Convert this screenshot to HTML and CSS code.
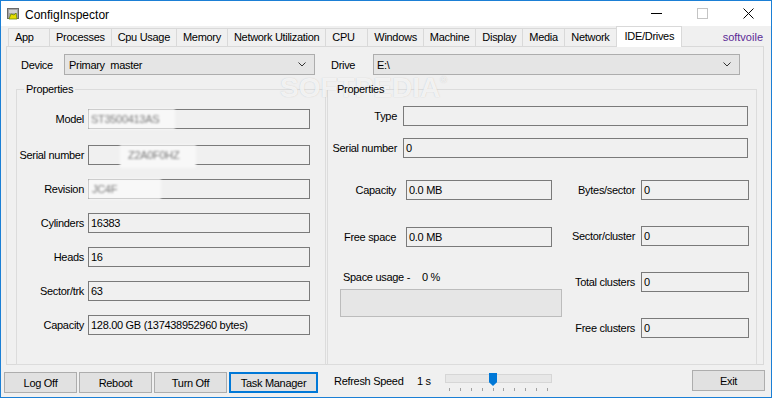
FILE: index.html
```html
<!DOCTYPE html>
<html lang="en">
<head>
  <meta charset="UTF-8" />
  <meta name="viewport" content="width=device-width, initial-scale=1.0"/>
  <title>ConfigInspector</title>
  <link rel="stylesheet" href="styles.css">
</head>
<body>
  <div class="window">
    <div class="titlebar">
      <svg class="app-icon" width="12" height="12" viewBox="0 0 12 12">
        <rect x="0.5" y="0.5" width="11" height="10" fill="#a4a4a4" stroke="#6a6a6a"/>
        <rect x="2" y="2" width="8" height="3" fill="#d0d0d0"/>
        <path d="M2 11 L4 6 L7 7 L9 5 L10 11 Z" fill="#e6dc00" stroke="#6c8a00" stroke-width="0.8"/>
      </svg>
      <span class="title">ConfigInspector</span>
      <div class="win-controls">
        <span class="ctl">
          <svg width="11" height="11" viewBox="0 0 11 11"><path d="M0 5.5 H11" stroke="#000" stroke-width="1"/></svg>
        </span>
        <span class="ctl">
          <svg width="11" height="11" viewBox="0 0 11 11"><rect x="0.5" y="0.5" width="10" height="10" fill="none" stroke="#c4c4c4"/></svg>
        </span>
        <span class="ctl">
          <svg width="11" height="11" viewBox="0 0 11 11"><path d="M0.5 0.5 L10.5 10.5 M10.5 0.5 L0.5 10.5" stroke="#000" stroke-width="1"/></svg>
        </span>
      </div>
    </div>

    <div class="tabstrip">
      <span class="tab tab-first">App</span>
      <span class="tab">Processes</span>
      <span class="tab">Cpu Usage</span>
      <span class="tab">Memory</span>
      <span class="tab">Network Utilization</span>
      <span class="tab">CPU</span>
      <span class="tab">Windows</span>
      <span class="tab">Machine</span>
      <span class="tab">Display</span>
      <span class="tab">Media</span>
      <span class="tab">Network</span>
      <span class="tab active">IDE/Drives</span>
      <span class="brand">softvoile</span>
    </div>

    <div class="panel">
      <div class="pick pick-device">
        <label>Device</label>
        <div class="combo">
          <span class="combo-text">Primary  master</span>
          <svg width="8" height="5" viewBox="0 0 8 5"><path d="M0.5 0.5 L4 4 L7.5 0.5" fill="none" stroke="#333"/></svg>
        </div>
      </div>
      <div class="pick pick-drive">
        <label>Drive</label>
        <div class="combo">
          <span class="combo-text">E:\</span>
          <svg width="8" height="5" viewBox="0 0 8 5"><path d="M0.5 0.5 L4 4 L7.5 0.5" fill="none" stroke="#333"/></svg>
        </div>
      </div>

      <fieldset class="group group-device">
        <legend>Properties</legend>
        <div class="field field-first">
          <span class="label">Model</span>
          <div class="value"><span class="blurred blur-model">ST3500413AS</span></div>
        </div>
        <div class="field">
          <span class="label">Serial number</span>
          <div class="value"><span class="blurred blur-serial">Z2A0F0HZ</span></div>
        </div>
        <div class="field">
          <span class="label">Revision</span>
          <div class="value"><span class="blurred blur-rev">JC4F</span></div>
        </div>
        <div class="field">
          <span class="label">Cylinders</span>
          <div class="value">16383</div>
        </div>
        <div class="field">
          <span class="label">Heads</span>
          <div class="value">16</div>
        </div>
        <div class="field">
          <span class="label">Sector/trk</span>
          <div class="value">63</div>
        </div>
        <div class="field">
          <span class="label">Capacity</span>
          <div class="value">128.00 GB (137438952960 bytes)</div>
        </div>
      </fieldset>

      <fieldset class="group group-drive">
        <legend>Properties</legend>
        <div class="field">
          <span class="label">Type</span>
          <div class="value"></div>
        </div>
        <div class="field">
          <span class="label">Serial number</span>
          <div class="value">0</div>
        </div>

        <div class="drive-lower">
          <div class="usage-col">
            <div class="field field-cap">
              <span class="label">Capacity</span>
              <div class="value">0.0 MB</div>
            </div>
            <div class="field">
              <span class="label">Free space</span>
              <div class="value">0.0 MB</div>
            </div>
            <div class="usage-label">Space usage -<span class="usage-pct">0 %</span></div>
            <div class="usage-bar"></div>
          </div>
          <div class="cluster-col">
            <div class="field">
              <span class="label">Bytes/sector</span>
              <div class="value">0</div>
            </div>
            <div class="field">
              <span class="label">Sector/cluster</span>
              <div class="value">0</div>
            </div>
            <div class="field">
              <span class="label">Total clusters</span>
              <div class="value">0</div>
            </div>
            <div class="field">
              <span class="label">Free clusters</span>
              <div class="value">0</div>
            </div>
          </div>
        </div>
      </fieldset>
    </div>

    <div class="bottombar">
      <button class="btn">Log Off</button>
      <button class="btn">Reboot</button>
      <button class="btn">Turn Off</button>
      <button class="btn btn-focus">Task Manager</button>
      <span class="refresh-label">Refresh Speed</span>
      <span class="refresh-value">1 s</span>
      <div class="slider">
        <div class="slider-track"></div>
        <div class="slider-ticks">
          <i></i><i></i><i></i><i></i><i></i><i></i><i></i><i></i><i></i><i></i>
        </div>
        <div class="slider-thumb"></div>
      </div>
      <button class="btn btn-exit">Exit</button>
    </div>

    <div class="watermark">SOFTPEDIA<sup>®</sup></div>
  </div>
</body>
</html>
```

FILE: styles.css
```css
* {
  box-sizing: border-box;
}

body {
  margin: 0;
  font-family: 'Liberation Sans', Arial, sans-serif;
  font-size: 11px;
  letter-spacing: -0.3px;
  color: #000;
  background: #fff;
}

.window {
  position: relative;
  width: 772px;
  height: 398px;
  border: 1px solid #1b7fd5;
  background: #f0f0f0;
  display: flex;
  flex-direction: column;
  overflow: hidden;
}

/* title bar */
.titlebar {
  height: 25px;
  background: #fff;
  display: flex;
  align-items: center;
  padding-left: 6px;
}

.app-icon {
  margin-top: 1px;
}

.title {
  margin-left: 6px;
  font-size: 12px;
  letter-spacing: 0;
  margin-top: 2px;
}

.win-controls {
  margin-left: auto;
  display: flex;
  height: 100%;
}

.ctl {
  width: 46px;
  display: flex;
  align-items: center;
  justify-content: center;
}

/* tabs */
.tabstrip {
  height: 20px;
  display: flex;
  align-items: flex-end;
  padding: 0 8px 0 7px;
}

.tab {
  height: 18px;
  min-width: 43px;
  line-height: 17px;
  padding: 0 6px;
  border: 1px solid #d9d9d9;
  border-bottom: none;
  margin-left: -1px;
  white-space: nowrap;
}

.tab-first {
  margin-left: 0;
  min-width: 42px;
}

.tab.active {
  position: relative;
  z-index: 2;
  height: 21px;
  line-height: 19px;
  margin-bottom: -1px;
  padding: 0 7px 0 8px;
  background: #fff;
}

.brand {
  margin-left: auto;
  color: #5b2a96;
  line-height: 18px;
  letter-spacing: 0;
}

/* tab page */
.panel {
  height: 319px;
  margin: 0 7px 0 5px;
  border: 1px solid #d9d9d9;
  display: grid;
  grid-template-columns: 310px 430px;
  grid-template-rows: 21px 1fr;
  column-gap: 1px;
  row-gap: 8px;
  padding: 7px 0 11px 9px;
}

.pick {
  display: flex;
  align-items: center;
}

.pick-device {
  padding-left: 5px;
}

.pick-device label {
  width: 43px;
}

.pick-device .combo {
  width: 251px;
}

.pick-drive {
  padding-left: 4px;
}

.pick-drive label {
  width: 42px;
}

.pick-drive .combo {
  width: 367px;
}

.combo {
  height: 21px;
  border: 1px solid #adadad;
  background: #e5e5e5;
  display: flex;
  align-items: center;
  justify-content: space-between;
  padding: 0 8px 0 4px;
}

.combo-text {
  white-space: pre;
}

.pick-drive .combo-text {
  margin-left: -1px;
}

.group {
  margin: 0;
  min-width: 0;
  border: 1px solid #dcdcdc;
  padding: 0;
}

.group legend {
  position: relative;
  z-index: 4;
  margin-left: 7px;
  padding: 0 2px;
  line-height: 13px;
}

.field {
  display: flex;
  align-items: center;
}

.field .label {
  text-align: right;
  white-space: nowrap;
}

.value {
  height: 20px;
  line-height: 18px;
  border: 1px solid #7a7a7a;
  background: #f0f0f0;
  padding: 0 2px;
  white-space: nowrap;
}

/* left group */
.group-device {
  padding-top: 13px;
}

.group-device .field {
  margin-bottom: 14px;
  gap: 4px;
}

.group-device .field-first {
  margin-bottom: 16px;
}

.group-device .label {
  width: 67px;
}

.group-device .value {
  width: 222px;
}

.blurred {
  display: inline-block;
  height: 20px;
  margin-top: -1px;
  background: #f8f8f8;
  color: #7a7a7a;
  filter: blur(1.2px);
  vertical-align: top;
  line-height: 20px;
}

.blur-model {
  width: 87px;
  margin-left: -3px;
  padding-left: 3px;
}

.blur-serial {
  width: 76px;
  margin-left: 29px;
  height: 23px;
  padding-left: 8px;
}

.blur-rev {
  width: 73px;
  margin-left: -3px;
  padding-left: 4px;
}

/* right group */
.group-drive {
  padding-top: 10px;
}

.group-drive > .field {
  gap: 6px;
  margin-bottom: 12px;
}

.group-drive > .field .label {
  width: 69px;
}

.group-drive > .field .value {
  width: 345px;
}

.drive-lower {
  display: flex;
  margin-top: 22px;
}

.usage-col {
  margin-left: 12px;
  width: 222px;
}

.usage-col .field {
  gap: 10px;
}

.usage-col .label {
  width: 56px;
}

.usage-col .value {
  width: 146px;
}

.usage-col .field-cap {
  margin-bottom: 27px;
}

.usage-label {
  margin-top: 24px;
  padding-left: 3px;
  line-height: 13px;
}

.usage-pct {
  margin-left: 12px;
}

.usage-bar {
  margin-top: 5px;
  height: 28px;
  border: 1px solid #bcbcbc;
  background: #e6e6e6;
}

.cluster-col {
  margin-left: auto;
  margin-right: 7px;
}

.cluster-col .field {
  gap: 6px;
  margin-bottom: 26px;
}

.cluster-col .label {
  width: 70px;
}

.cluster-col .value {
  width: 108px;
}

/* bottom bar */
.bottombar {
  height: 32px;
  display: flex;
  align-items: flex-start;
  padding: 7px 6px 0 3px;
}

.btn {
  width: 73px;
  height: 21px;
  margin-right: 2px;
  border: 1px solid #adadad;
  background: #e1e1e1;
  font-family: inherit;
  font-size: 11px;
  letter-spacing: -0.3px;
  color: #000;
  padding: 0;
}

.btn-focus {
  width: 89px;
  border: 2px solid #0078d7;
}

.refresh-label {
  margin-left: 14px;
  width: 83px;
  line-height: 19px;
}

.refresh-value {
  width: 28px;
  line-height: 19px;
}

.slider {
  position: relative;
  width: 107px;
  height: 21px;
}

.slider-track {
  margin-top: 2px;
  height: 9px;
  border: 1px solid #d6d6d6;
  background: #e7e7e7;
}

.slider-ticks {
  margin-top: 5px;
  height: 4px;
  display: flex;
  justify-content: space-between;
  padding: 0 4px;
}

.slider-ticks i {
  width: 1px;
  height: 3px;
  background: #a0a0a0;
}

.slider-thumb {
  position: absolute;
  left: 44px;
  top: 1px;
  width: 8px;
  height: 13px;
  background: #0078d7;
  clip-path: polygon(0 0, 100% 0, 100% 72%, 50% 100%, 0 72%);
}

.btn-exit {
  margin-left: auto;
  margin-top: -2px;
  margin-right: 0;
}

/* watermark overlay */
.watermark {
  position: absolute;
  z-index: 3;
  left: 279px;
  top: 73px;
  font-size: 28px;
  font-weight: bold;
  letter-spacing: 0;
  line-height: 28px;
  color: rgba(255, 255, 255, 0.8);
  text-shadow: 0 0 1px rgba(150, 150, 150, 0.5);
  pointer-events: none;
}

.watermark sup {
  font-size: 9px;
  vertical-align: top;
  line-height: 12px;
}
```
